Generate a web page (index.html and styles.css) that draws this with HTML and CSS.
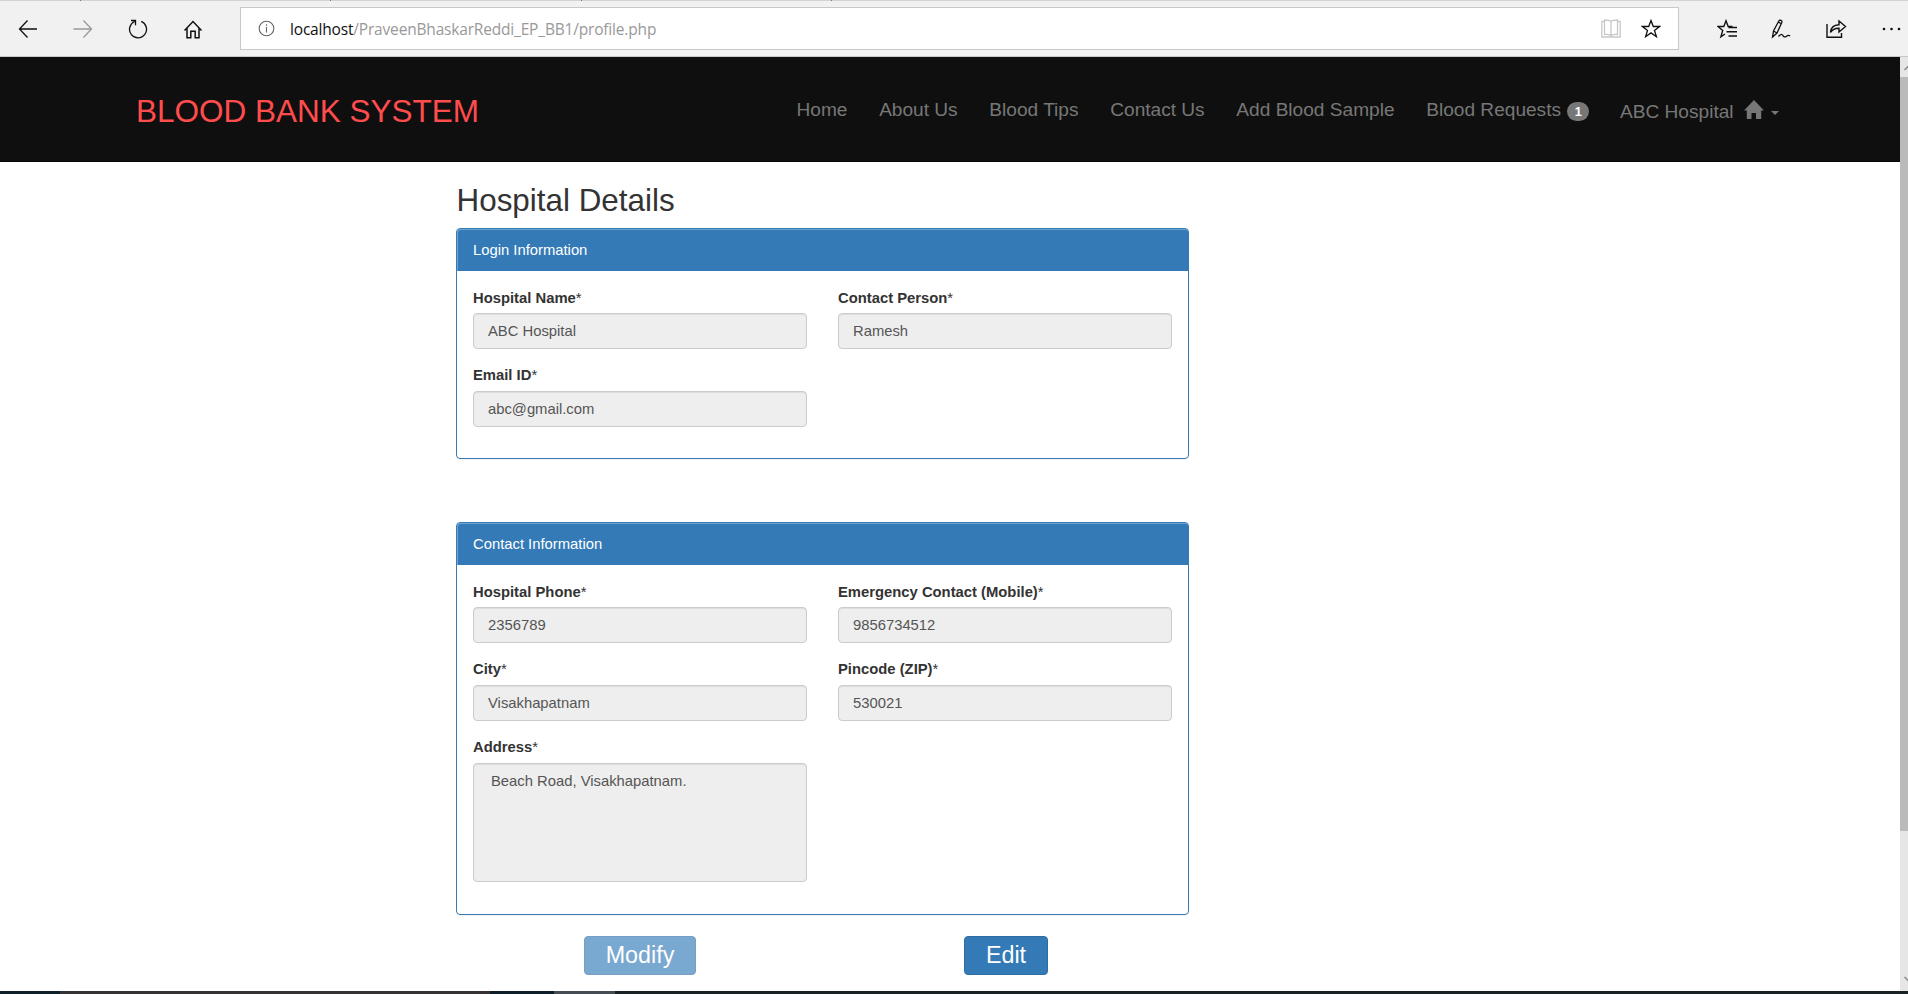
FILE: index.html
```html
<!DOCTYPE html>
<html lang="en">
<head>
<meta charset="utf-8">
<title>Blood Bank System</title>
<link rel="stylesheet" href="styles.css">
</head>
<body>
<div class="tabstrip"><i class="tab tab-a"></i><i class="tab tab-b"></i><i class="tab tab-b"></i><i class="tab tab-b"></i></div>
<div class="toolbar">
  <div class="tools">
    <svg width="20" height="20" viewBox="0 0 20 20"><path d="M19 10H1.500M9.500 1.500 1.500 10l8 8.500"/></svg>
    <svg class="off" width="20" height="20" viewBox="0 0 20 20"><path d="M.5 10h18M10.500 1.500l8 8.500-8 8.500"/></svg>
    <svg width="20" height="20" viewBox="0 0 20 20"><path d="M6.600 2.500a8.500 8.500 0 1 0 6.600-.1M3 1.500h4.500v4.800"/></svg>
    <svg width="20" height="20" viewBox="0 0 20 20"><path stroke-width="1.500" d="M1.500 11.500l8.500-9 8.500 9M4 9v9.700h3.800v-6.500h4.400v6.500H16V9"/></svg>
  </div>
  <div class="address">
    <svg class="info" width="17" height="17" viewBox="0 0 17 17"><circle cx="8.500" cy="8.500" r="7.300"/><path d="M8.500 7v5.500M8.500 4.300v1.400"/></svg>
    <span class="url"><b>localhost</b>/PraveenBhaskarReddi_EP_BB1/profile.php</span>
    <svg class="book" width="20" height="20" viewBox="0 0 20 20"><path d="M10 2.500v14M10 2.500C8.500 1 5.500 1 3.500 1v14.500c2.500-.2 5 0 6.500 1.200M10 2.500C11.500 1 14.500 1 16.500 1v14.500c-2.500-.2-5 0-6.500 1.200M3.500 2.500H.8v15.500h18.400V2.500h-2.700"/></svg>
    <svg class="star" width="20" height="20" viewBox="0 0 20 20"><path d="M10 1.500l2.300 6h6.200l-5 3.900 1.900 6.300-5.400-3.800-5.400 3.800 1.900-6.300-5-3.900h6.200z"/></svg>
  </div>
  <div class="actions">
    <svg width="20" height="20" viewBox="0 0 20 20"><path stroke-width="1.400" d="M15.500 7.500h-4.300L9 1.800 6.800 7.500H1l4.700 4-1.800 6.300L8 15M11.500 8.500H20M9.500 12.800H20M11.500 17H20"/></svg>
    <svg width="20" height="20" viewBox="0 0 20 20"><path stroke-width="1.300" d="M1.500 18l1-6L7.800 2c1-1.500 3.800-.5 3 1.500L6 14zM7.300 3l3 1.800M2.500 12l3 1.800M7.500 17.500c2.500-3 3.500-2.500 4.500-.8s2.500 1.500 3.500.5 2-1.200 3.700-.4"/></svg>
    <svg width="21" height="20" viewBox="0 0 21 20"><path stroke-width="1.400" d="M1 5v13.300h14.500V14M4.500 13.500C4.800 8.500 8 6 13 5.800V2l6.500 5.500L13 13V9.300C9 9.200 6.500 10.300 4.500 13.500z"/></svg>
    <svg width="20" height="20" viewBox="0 0 20 20"><g class="dots"><circle cx="3" cy="10" r="1.300"/><circle cx="10.500" cy="10" r="1.300"/><circle cx="18" cy="10" r="1.300"/></g></svg>
  </div>
</div>
<div class="viewport">
  <div class="page">
    <nav class="navbar">
      <span class="brand">BLOOD BANK SYSTEM</span>
      <ul class="links">
        <li>Home</li><li>About Us</li><li>Blood Tips</li><li>Contact Us</li><li>Add Blood Sample</li>
        <li>Blood Requests <span class="badge">1</span></li>
        <li class="user">ABC Hospital <svg class="house" width="20" height="20" viewBox="0 0 20 20"><path d="M10 0l10 10.500h-2.800V19H12v-6H7.500v6H2.800v-8.500H0z"/></svg><i class="caret"></i></li>
      </ul>
    </nav>
    <main class="content">
      <h2>Hospital Details</h2>
      <section class="panel">
        <h3>Login Information</h3>
        <div class="fields">
          <label>Hospital Name<sup>*</sup><input disabled value="ABC Hospital"></label>
          <label>Contact Person<sup>*</sup><input disabled value="Ramesh"></label>
          <label>Email ID<sup>*</sup><input disabled value="abc@gmail.com"></label>
        </div>
      </section>
      <section class="panel contact">
        <h3>Contact Information</h3>
        <div class="fields">
          <label>Hospital Phone<sup>*</sup><input disabled value="2356789"></label>
          <label>Emergency Contact (Mobile)<sup>*</sup><input disabled value="9856734512"></label>
          <label>City<sup>*</sup><input disabled value="Visakhapatnam"></label>
          <label>Pincode (ZIP)<sup>*</sup><input disabled value="530021"></label>
          <label>Address<sup>*</sup><textarea disabled>Beach Road, Visakhapatnam.</textarea></label>
        </div>
      </section>
      <div class="buttons">
        <button class="modify" disabled>Modify</button>
        <button class="edit">Edit</button>
      </div>
    </main>
  </div>
  <div class="scrollbar">
    <svg width="8" height="20" viewBox="0 0 8 20"><path d="M4.500 13 9 8.500"/></svg>
    <div class="thumb"></div>
    <svg width="8" height="20" viewBox="0 0 8 20"><path d="M4.500 7 9 11.500"/></svg>
  </div>
</div>
<div class="taskbar"><i class="t1"></i><i class="t2"></i><i class="t3"></i><i class="t4"></i></div>
</body>
</html>
```
FILE: styles.css
```css
* { box-sizing: border-box; }
body {
  margin: 0;
  width: 1908px;
  height: 994px;
  overflow: hidden;
  display: flex;
  flex-direction: column;
  background: #fff;
  color: #333;
  font: 14.875px/21px "Liberation Sans", Arial, sans-serif;
}
svg { display: block; flex: none; fill: none; stroke: #111; stroke-width: 1.3; }

.tabstrip { display: flex; height: 1px; background: #d2d2d2; }
.tab { border-right: 1px solid #777; }
.tab-a { width: 81px; }
.tab-b { width: 250.3px; }

.toolbar {
  display: flex;
  align-items: center;
  height: 56px;
  background: #f1f1f1;
  border-bottom: 1px solid #c8c8c8;
}
.tools { display: flex; gap: 35px; width: 240px; padding-left: 18px; }
.tools .off { stroke: #999; }
.address {
  display: flex;
  align-items: center;
  width: 1439px;
  height: 43px;
  padding: 0 17px 0 17px;
  background: #fff;
  border: 1px solid #c8c8c8;
}
.info { stroke: #666; stroke-width: 1.1; }
.url { margin-left: 15px; flex: 1; color: #999; font: 15.5px/22px "Open Sans", "Noto Sans", sans-serif; letter-spacing: -.18px; white-space: nowrap; }
.url b { color: #111; font-weight: 400; }
.book { stroke: #c8c8c8; margin-right: 20px; }
.actions { display: flex; gap: 34.4px; padding-left: 38px; }
.dots { fill: #111; stroke: none; }

.viewport { display: flex; height: 934px; }
.page { width: 1900px; }
.navbar {
  display: flex;
  align-items: baseline;
  height: 105px;
  padding: 36px 0 0 136px;
  background: #0f0f0f;
  border-bottom: 1px solid #080808;
}
.brand { width: 660.5px; color: #ff4c4c; font-size: 31.5px; line-height: 36px; }
.links {
  display: flex;
  gap: 31.7px;
  margin: 0;
  padding: 0;
  list-style: none;
  color: #777;
  font-size: 19.1px;
  line-height: 24px;
  position: relative;
  top: -6px;
  white-space: nowrap;
}
.badge {
  display: inline-block;
  width: 22px;
  height: 19px;
  margin-left: 1px;
  border-radius: 10px;
  background: #777;
  color: #fff;
  font: bold 12.75px/19px "Liberation Sans", Arial, sans-serif;
  text-align: center;
}
.user { position: relative; top: 2px; left: -1px; display: flex; }
.house { fill: #777; stroke: none; margin: 0 7px 0 10px; }
.caret { margin-top: 11px; width: 8px; height: 4px; border: 4px solid transparent; border-top-color: #777; border-bottom: 0; }

.content { width: 733px; margin-left: 456px; }
h2 { margin: 0; padding: 21px 0 0 .5px; height: 66px; font-size: 31.4px; line-height: 35px; font-weight: 400; }
.panel {
  height: 231px;
  border: 1px solid #337ab7;
  border-radius: 4px;
  box-shadow: 0 1px 1px rgba(0, 0, 0, .05);
}
.contact { margin-top: 63px; height: 393px; }
h3 {
  margin: 0;
  height: 42px;
  padding: 11px 16px 10px;
  border-radius: 3px 3px 0 0;
  background: #337ab7;
  box-shadow: inset 1px 1px #6fa3d0;
  color: #fff;
  font-size: 14.8px;
  line-height: 21px;
  font-weight: 400;
}
.fields { display: grid; grid-template-columns: 334px 334px; gap: 16px 31px; padding: 17px 16px 0; }
label { display: block; font-weight: 700; font-size: 14.8px; line-height: 21px; }
sup { display: inline-block; vertical-align: top; font-weight: 400; font-size: 14.8px; line-height: 21px; }
input, textarea {
  display: block;
  width: 334px;
  height: 36px;
  margin: 5px 0 0;
  padding: 0 14px;
  background: #eee;
  border: 1px solid #ccc;
  border-radius: 4px;
  box-shadow: inset 0 1px 1px rgba(0, 0, 0, .075);
  color: #555;
  font: 14.8px/21px "Liberation Sans", Arial, sans-serif;
}
label:nth-child(-n+2) input { margin-top: 4px; }
textarea { height: 119px; padding: 7px 17px; resize: none; }
.buttons { display: flex; padding: 21px 0 0 128px; }
button {
  height: 39px;
  padding: 0;
  border: 1px solid #2e6da4;
  border-radius: 4px;
  background: #337ab7;
  color: #fff;
  font: 23.3px/35px "Liberation Sans", Arial, sans-serif;
}
.modify { width: 112px; opacity: .65; }
.edit { width: 84px; margin-left: 268px; }

.scrollbar { width: 8px; background: #e6e6e6; display: flex; flex-direction: column; }
.scrollbar svg { stroke: #888; stroke-width: 1.5; }
.thumb { height: 754px; margin-bottom: 139px; background: #bababa; }
.taskbar { display: flex; height: 3px; background: #1a2226; }
.t1 { width: 60px; background: #10202b; }
.t2 { width: 430px; background: #353333; }
.t3 { width: 64px; background: #0f1f2a; }
.t4 { width: 61px; background: #454d52; }
```
